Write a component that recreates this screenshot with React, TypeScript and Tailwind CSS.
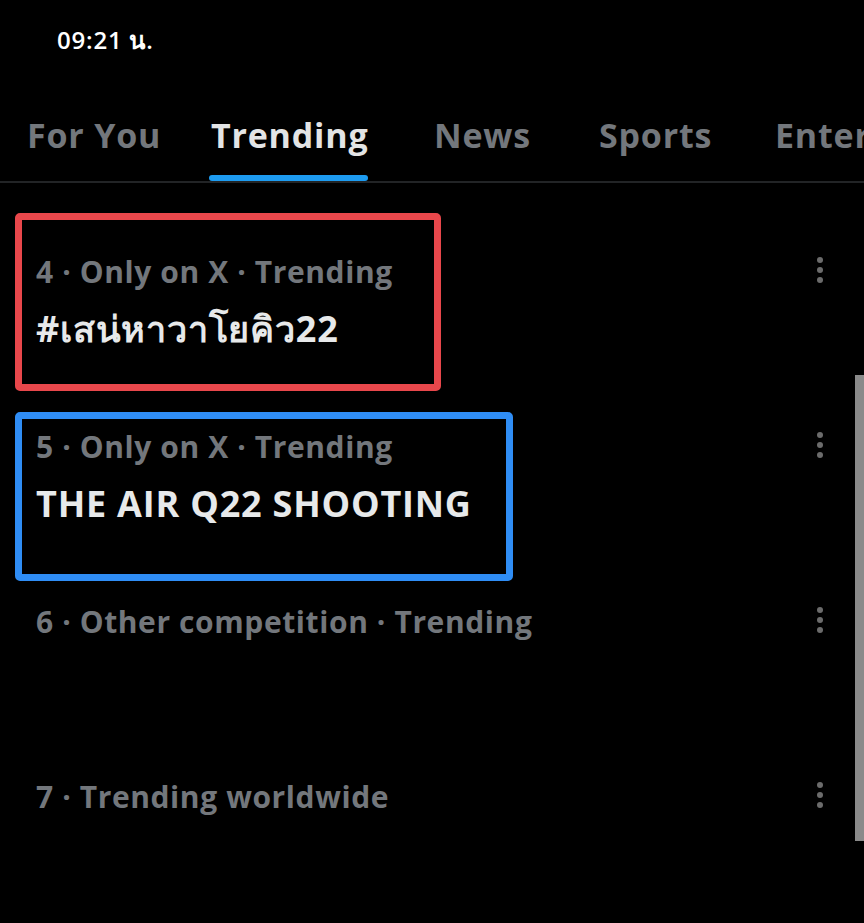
import React from 'react'

const tabs = [
  { label: 'For You', active: false, w: 'w-[184px]' },
  { label: 'Trending', active: true, w: 'w-[223px]' },
  { label: 'News', active: false, w: 'w-[165px]' },
  { label: 'Sports', active: false, w: 'w-[176px]' },
  { label: 'Entertainment', active: false, w: 'w-[200px]' },
]

const trends = [
  { meta: '4 · Only on X · Trending', title: '#เสน่หาวาโยคิว22' },
  { meta: '5 · Only on X · Trending', title: 'THE AIR Q22 SHOOTING' },
  { meta: '6 · Other competition · Trending', title: '' },
  { meta: '7 · Trending worldwide', title: '' },
]

function Dots() {
  return (
    <div className="flex flex-col items-center gap-[4px] pt-[4px]">
      <span className="w-[6px] h-[6px] rounded-full bg-[#6b6b6b]" />
      <span className="w-[6px] h-[6px] rounded-full bg-[#6b6b6b]" />
      <span className="w-[6px] h-[6px] rounded-full bg-[#6b6b6b]" />
    </div>
  )
}

export default function App() {
  return (
    <div
      className="relative w-[864px] h-[923px] overflow-hidden bg-black"
      style={{ fontFamily: '"Open Sans", "Noto Sans", "DejaVu Sans", sans-serif' }}
    >
      {/* status bar */}
      <div className="h-[100px] pl-[57px] pt-[24px]">
        <span className="text-[24px] font-semibold text-white leading-[32px] tracking-[0.8px]">09:21 น.</span>
      </div>

      {/* tabs */}
      <div className="flex pl-[27px] h-[83px] border-b-2 border-[#222426] whitespace-nowrap">
        {tabs.map((t) => (
          <div key={t.label} className={`${t.w} shrink-0 flex flex-col items-start`}>
            <span
              className={`text-[34px] font-bold leading-[70px] tracking-[0.8px] ${
                t.active ? 'text-[#e3e4e5]' : 'text-[#73777c]'
              }`}
            >
              {t.label}
            </span>
            {t.active && <span className="w-[159px] h-[7px] rounded-full bg-[#1d9bf0] mt-[5px] -ml-[2px]" />}
          </div>
        ))}
      </div>

      {/* trends */}
      <div className="pt-[70px] pl-[36px] pr-[41px]">
        {trends.map((t) => (
          <div key={t.meta} className="h-[175px] flex justify-between">
            <div>
              <div className="text-[30px] font-bold leading-[38px] text-[#73777c] tracking-[0.6px] whitespace-nowrap">
                {t.meta}
              </div>
              {t.title && (
                <div className="mt-[18px] text-[36px] font-bold leading-[40px] text-[#e7e9ea] tracking-[0.8px] whitespace-nowrap">
                  {t.title}
                </div>
              )}
            </div>
            <Dots />
          </div>
        ))}
      </div>

      {/* annotation boxes */}
      <div className="absolute left-[15px] top-[213px] w-[426px] h-[178px] border-[7px] border-[#e8474b] rounded-[5px]" />
      <div className="absolute left-[15px] top-[412px] w-[498px] h-[169px] border-[7px] border-[#2f8df5] rounded-[5px]" />

      {/* scrollbar */}
      <div className="absolute right-0 top-[375px] w-[9px] h-[466px] bg-[#8a8a8a]" />
    </div>
  )
}
